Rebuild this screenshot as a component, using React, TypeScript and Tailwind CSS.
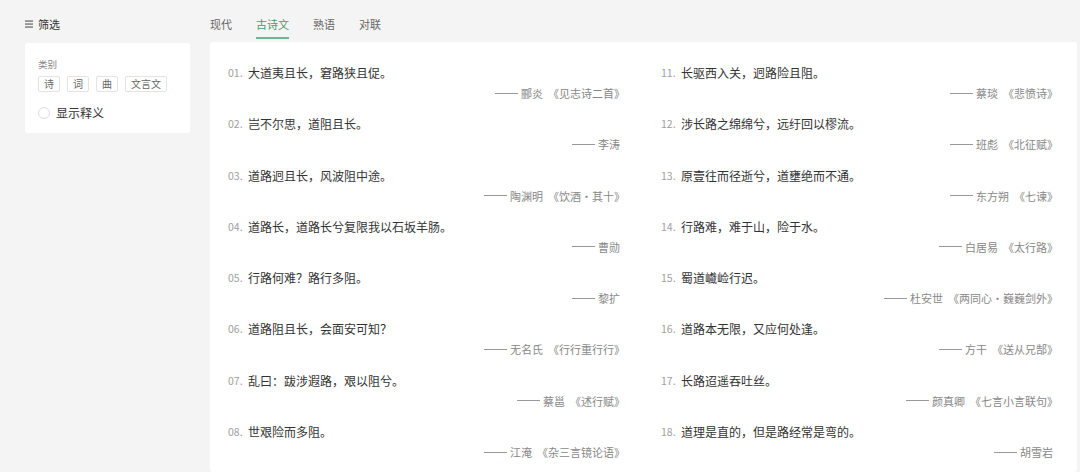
import React from "react";

type Item = { n: string; text: string; author: string; book?: string };

const left: Item[] = [
  { n: "01.", text: "大道夷且长，窘路狭且促。", author: "郦炎", book: "《见志诗二首》" },
  { n: "02.", text: "岂不尔思，道阻且长。", author: "李涛" },
  { n: "03.", text: "道路迥且长，风波阻中途。", author: "陶渊明", book: "《饮酒·其十》" },
  { n: "04.", text: "道路长，道路长兮复限我以石坂羊肠。", author: "曹勋" },
  { n: "05.", text: "行路何难？路行多阻。", author: "黎扩" },
  { n: "06.", text: "道路阻且长，会面安可知？", author: "无名氏", book: "《行行重行行》" },
  { n: "07.", text: "乱曰：跋涉遐路，艰以阻兮。", author: "蔡邕", book: "《述行赋》" },
  { n: "08.", text: "世艰险而多阻。", author: "江淹", book: "《杂三言镜论语》" },
];

const right: Item[] = [
  { n: "11.", text: "长驱西入关，迥路险且阻。", author: "蔡琰", book: "《悲愤诗》" },
  { n: "12.", text: "涉长路之绵绵兮，远纡回以樛流。", author: "班彪", book: "《北征赋》" },
  { n: "13.", text: "原壹往而径逝兮，道壅绝而不通。", author: "东方朔", book: "《七谏》" },
  { n: "14.", text: "行路难，难于山，险于水。", author: "白居易", book: "《太行路》" },
  { n: "15.", text: "蜀道巇崄行迟。", author: "杜安世", book: "《两同心·巍巍剑外》" },
  { n: "16.", text: "道路本无限，又应何处逢。", author: "方干", book: "《送从兄郜》" },
  { n: "17.", text: "长路迢遥吞吐丝。", author: "颜真卿", book: "《七言小言联句》" },
  { n: "18.", text: "道理是直的，但是路经常是弯的。", author: "胡雪岩" },
];

function Entry({ item }: { item: Item }) {
  return (
    <div className="flex flex-col">
      <div className="flex items-center h-[20px]">
        <span className="w-[20px] text-[10.5px] text-[#a0a0a0] leading-[20px]">{item.n}</span>
        <span className="text-[12px] text-[#333] leading-[20px]">{item.text}</span>
      </div>
      <div className="flex justify-end h-[20px] items-center text-[11px] text-[#888] leading-[20px]">
        <span className="inline-block w-[23px] h-px bg-[#999] mr-[3px]" />
        <span>{item.author}</span>
        {item.book && <span className="ml-[5px] mr-[-5px]">{item.book}</span>}
      </div>
    </div>
  );
}

export default function App() {
  return (
    <div
      className="w-[1080px] h-[472px] overflow-hidden bg-[#f4f4f4] flex"
      style={{ fontFamily: '"Noto Sans CJK SC", "Noto Sans", sans-serif' }}
    >
      {/* Sidebar */}
      <div className="ml-[25px] w-[165px] flex flex-col">
        <div className="h-[43px] flex items-center pt-[5px] gap-[5px] text-[11px] text-[#333]">
          <svg width="8" height="8" viewBox="0 0 8 8" className="shrink-0">
            <rect x="0" y="0.5" width="8" height="1.1" fill="#555" />
            <rect x="0" y="3.5" width="8" height="1.1" fill="#555" />
            <rect x="0" y="6.5" width="8" height="1.1" fill="#555" />
          </svg>
          <span>筛选</span>
        </div>
        <div className="bg-white rounded-[3px] pl-[13px] pt-[15px] pb-[12px]">
          <div className="text-[9.5px] leading-[12px] text-[#888]">类别</div>
          <div className="flex gap-[7px] mt-[6px]">
            {["诗", "词", "曲", "文言文"].map((t) => (
              <span
                key={t}
                className="h-[16px] px-[5px] border border-[#e3e3e3] rounded-[2px] text-[10px] leading-[14px] text-[#666] flex items-center"
              >
                {t}
              </span>
            ))}
          </div>
          <div className="flex items-center mt-[13px] h-[16px] gap-[6px]">
            <span className="w-[12px] h-[12px] rounded-full border border-[#dcdcdc] bg-white" />
            <span className="text-[12px] text-[#333] leading-[16px]">显示释义</span>
          </div>
        </div>
      </div>

      {/* Main */}
      <div className="ml-[20px] w-[867px] flex flex-col">
        <div className="h-[42px] flex gap-[24px] text-[11px]">
          {["现代", "古诗文", "熟语", "对联"].map((t) => {
            const active = t === "古诗文";
            return (
              <div key={t} className="flex flex-col">
                <span
                  className={
                    "pt-[16px] leading-[16px] pb-[5px] border-b-2 " +
                    (active ? "text-[#3f9f70] border-[#6cb892]" : "text-[#666] border-transparent")
                  }
                >
                  {t}
                </span>
              </div>
            );
          })}
        </div>
        <div className="flex-1 bg-white rounded-[3px] pt-[21px] pl-[18px] pr-[24px] grid grid-cols-2 gap-x-[41px] content-start">
          <div className="flex flex-col gap-[11.3px]">
            {left.map((it) => (
              <Entry key={it.n} item={it} />
            ))}
          </div>
          <div className="flex flex-col gap-[11.3px]">
            {right.map((it) => (
              <Entry key={it.n} item={it} />
            ))}
          </div>
        </div>
      </div>
    </div>
  );
}
